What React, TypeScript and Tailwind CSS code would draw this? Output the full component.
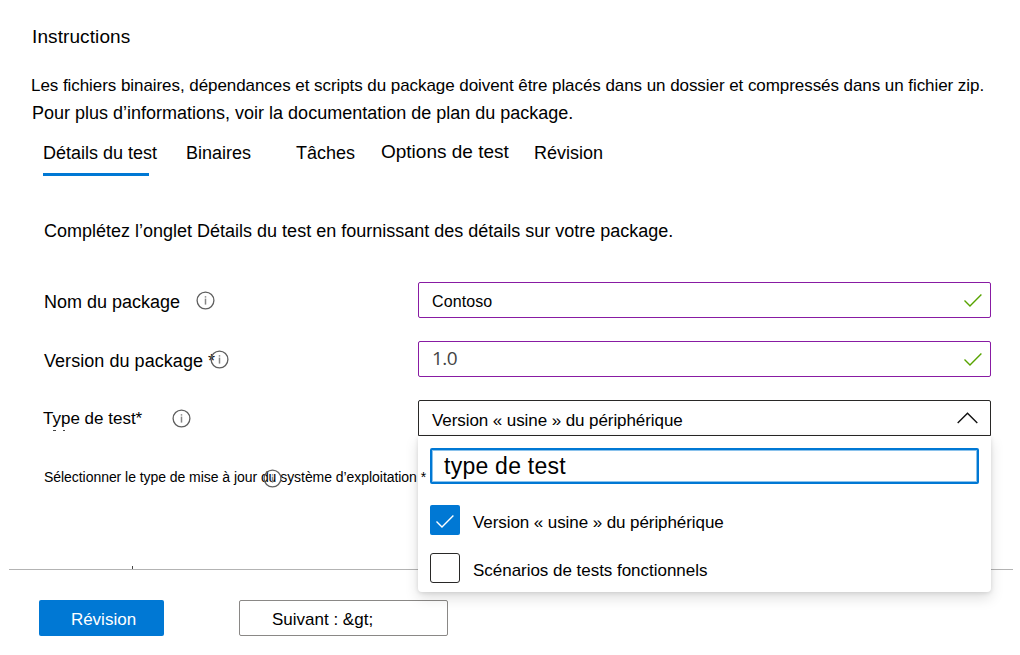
import type { ReactNode } from "react";

function InfoIcon() {
  return (
    <svg width="19" height="19" viewBox="0 0 19 19" fill="none" className="block shrink-0">
      <circle cx="9.5" cy="9.5" r="8.4" stroke="#5f5f5f" strokeWidth="1.3" />
      <path d="M9.5 7.6V13.6" stroke="#858585" strokeWidth="1.5" />
      <path d="M9.5 5.2V6.6" stroke="#858585" strokeWidth="1.5" />
    </svg>
  );
}

function Check({ className }: { className: string }) {
  return (
    <svg width="18" height="13" viewBox="0 0 18 13" fill="none" className={className}>
      <path d="M0.5 6.4L6 11.9L17.4 0.5" stroke="currentColor" strokeWidth="1.4" />
    </svg>
  );
}

function Field({ children }: { children: ReactNode }) {
  return (
    <div className="flex h-9 w-[573px] items-center justify-between rounded-[2px] border border-[#881ba3] bg-white pr-2 pl-[13px]">
      {children}
    </div>
  );
}

function Option({ label, checked }: { label: ReactNode; checked?: boolean }) {
  return (
    <label className="flex h-[30px] items-center">
      <span
        className={
          checked
            ? "flex size-[30px] items-center justify-center rounded-[2px] bg-[#0078d4]"
            : "size-[30px] rounded-[3px] border border-[#292827] bg-white"
        }
      >
        {checked && <Check className="mt-[3px] block text-white" />}
      </span>
      {label}
    </label>
  );
}

export default function App() {
  return (
    <main className="flex h-[655px] w-[1020px] flex-col overflow-hidden bg-white pt-[25px] font-['Liberation_Sans',Arial,sans-serif] leading-6 whitespace-nowrap text-black [font-variant-ligatures:none]">
      <h1 className="pl-8 text-[19px] tracking-[0.1px]">Instructions</h1>
      <p className="mt-[25px] pl-[31px] text-[17px] tracking-[-0.063px]">
        Les fichiers binaires, dépendances et scripts du package doivent être placés dans un dossier et compressés dans un fichier zip.
      </p>
      <p className="mt-[3px] pl-8 text-[18px]">
        Pour plus d’informations, voir la documentation de plan du package.
      </p>

      <nav className="mt-4 flex h-[35px] pl-[43px] text-[18px]">
        <div className="w-[143px]">
          <div>Détails du test</div>
          <div className="mt-2 h-[3px] w-[106px] bg-[#0078d4]" />
        </div>
        <div className="w-[110px]">Binaires</div>
        <div className="w-[85px]">Tâches</div>
        <div className="-mt-px w-[153px] text-[19px]">Options de test</div>
        <div>Révision</div>
      </nav>

      <section className="mt-[43px] pl-[44px]">
        <p className="text-[18px]">
          Complétez l’onglet Détails du test en fournissant des détails sur votre package.
        </p>

        <div className="mt-[39px] flex h-[59px] items-start">
          <div className="flex w-[374px] items-start pt-[7px]">
            <span className="mt-px w-[152px] text-[18px]">Nom du package</span>
            <span className="mt-[2px]"><InfoIcon /></span>
          </div>
          <Field>
            <span className="mt-[4px] text-[16px] tracking-[0.1px]">Contoso</span>
            <Check className="block text-[#57a300]" />
          </Field>
        </div>

        <div className="flex h-[59px] items-start">
          <div className="flex w-[374px] items-start pt-[7px]">
            <span className="mt-px w-[166px] text-[18px] tracking-[0.05px]">Version du package *</span>
            <span className="mt-[2px]"><InfoIcon /></span>
          </div>
          <Field>
            <span className="-mt-[2px] font-['Open_Sans','Noto_Sans',sans-serif] text-[19px] tracking-[-0.6px] text-[#444444]">1.0</span>
            <Check className="block text-[#57a300]" />
          </Field>
        </div>

        <div className="flex h-[59px] items-start">
          <div className="flex w-[374px] items-start pt-[6px]">
            <div className="h-8 w-[128px]">
              <div className="-ml-px pt-px text-[17px]">Type de test*</div>
              <div className="-mt-px flex gap-[7px] pl-[9px]">
                <span className="h-px w-[3px] bg-[#444444]" />
                <span className="h-px w-[2px] bg-[#444444]" />
              </div>
            </div>
            <span className="mt-[3px]"><InfoIcon /></span>
          </div>
          <div className="relative">
            <div className="flex h-9 w-[573px] items-center justify-between rounded-t-[2px] border border-[#292827] bg-white pr-3 pl-[13px]">
              <span className="mt-[6px] text-[17px] tracking-[-0.08px]">Version « usine » du périphérique</span>
              <svg width="21" height="12" viewBox="0 0 21 12" fill="none" className="block">
                <path d="M0.7 11L10.5 1.2L20.3 11" stroke="#111" strokeWidth="1.4" />
              </svg>
            </div>
            <div className="absolute top-9 left-0 z-10 flex h-[156px] w-[573px] flex-col rounded-b-[4px] bg-white px-3 pt-3 shadow-[0_6px_14px_rgba(0,0,0,0.13),0_1px_4px_rgba(0,0,0,0.11)]">
              <div className="flex h-9 items-center rounded-[2px] border-2 border-[#0078d4] pl-3 shadow-[inset_0_0_0_1px_#8ac2ec]">
                <span className="text-[23px] tracking-[0.25px]">type de test</span>
              </div>
              <div className="mt-[21px] flex flex-col gap-[18px]">
                <Option checked label={<span className="mt-[6px] ml-[13px] text-[17px] tracking-[-0.08px]">Version « usine » du périphérique</span>} />
                <Option label={<span className="mt-[6px] ml-[13px] text-[17px] tracking-[-0.03px]">Scénarios de tests fonctionnels</span>} />
              </div>
            </div>
          </div>
        </div>

        <div className="relative h-[42px] pt-[6px]">
          <span className="text-[14px] tracking-[-0.05px]">
            Sélectionner le type de mise à jour du système d’exploitation{" "}
            <span className="relative z-20">*</span>
          </span>
          <span className="absolute top-[10px] left-[219px]"><InfoIcon /></span>
        </div>
      </section>

      <footer className="mt-[65px] pr-[7px] pl-[9px]">
        <div className="ml-[123px] h-[3px] w-px bg-[#444444]" />
        <div className="h-px bg-[#b3b3b3]" />
        <div className="mt-[30px] flex gap-[75px] pl-[30px]">
          <button className="flex h-9 w-[125px] items-center justify-center rounded-[2px] bg-[#0078d4] text-[17px] text-white">
            <span className="mt-[3px] ml-[4px]">Révision</span>
          </button>
          <button className="flex h-9 w-[209px] items-center rounded-[2px] border border-[#8a8886] bg-white pl-8 text-[17px]">
            <span className="mt-[3px]">{"Suivant : &gt;"}</span>
          </button>
        </div>
      </footer>
    </main>
  );
}
